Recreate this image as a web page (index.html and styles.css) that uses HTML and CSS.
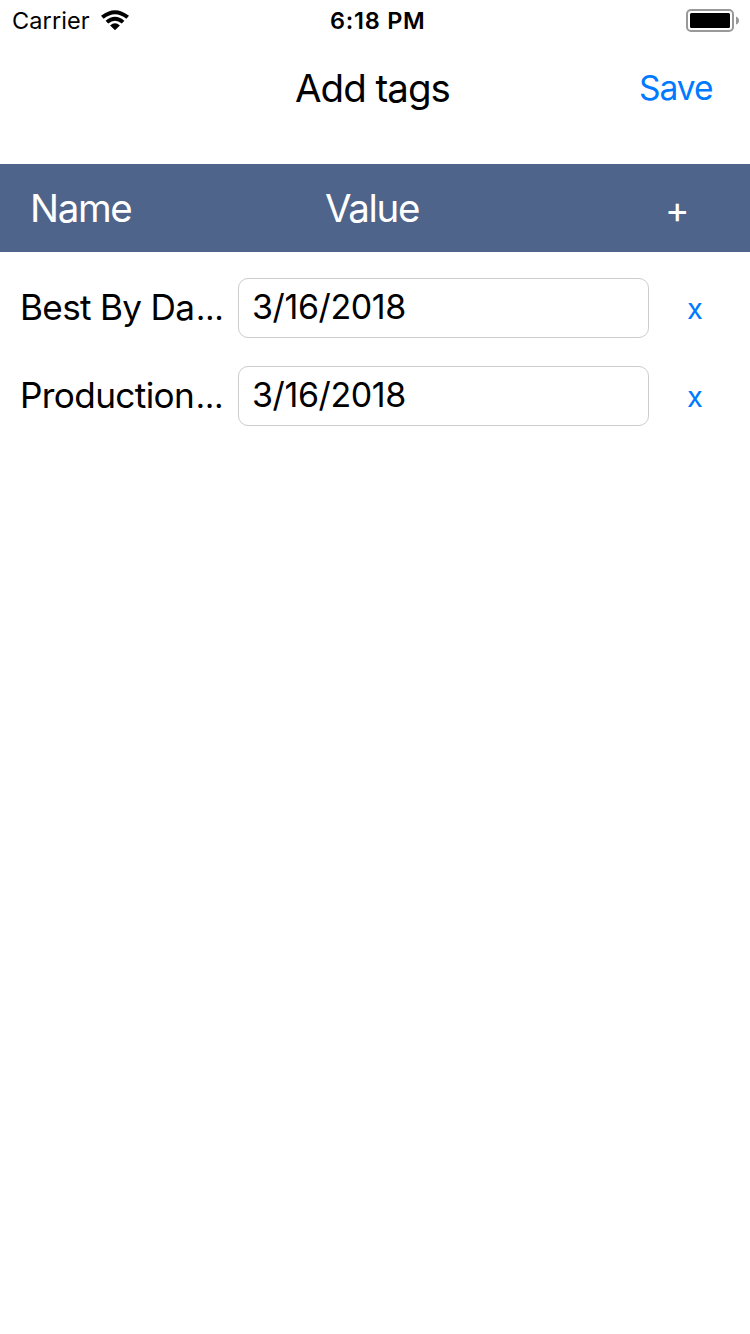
FILE: index.html
```html
<!DOCTYPE html>
<html lang="en">
<head>
<meta charset="utf-8">
<title>Add tags</title>
<link rel="stylesheet" href="styles.css">
</head>
<body>
<div class="status">
  <div class="network"><span class="carrier">Carrier</span>
    <svg class="wifi" width="28" height="20" viewBox="0 0 28 20"><path d="M0 5.8Q14-5.4 28 5.8L25.4 8.7Q14-.4 2.6 8.7ZM4.6 10.7Q14 3 23.4 10.7L20.8 13.5Q14 8 7.2 13.5ZM9.1 15.4Q14 11.2 18.9 15.4L14 20.2Z"/></svg>
  </div>
  <span class="time">6:18 PM</span>
  <svg class="battery" width="53" height="24" viewBox="0 0 53 24"><rect x="1" y="1" width="46" height="21" rx="4" fill="#fff" stroke="#999" stroke-width="2"/><rect x="4" y="4" width="40" height="15" rx="1.5"/><path d="M50 7.5Q53 8.5 53 11.5T50 15.5Z" fill="#999"/></svg>
</div>
<header class="nav"><h1 class="title">Add tags</h1><a class="save">Save</a></header>
<div class="columns"><span class="name-head">Name</span><span class="value-head">Value</span><span class="add">+</span></div>
<main class="tags">
  <div class="tag"><label class="best">Best By Da<span class="dots">…</span></label><div class="field">3/16/2018</div><a class="remove">x</a></div>
  <div class="tag"><label class="production">Production<span class="dots">…</span></label><div class="field">3/16/2018</div><a class="remove">x</a></div>
</main>
</body>
</html>
```
FILE: styles.css
```css
* { box-sizing: border-box; }
body { margin: 0; background: #fff; color: #000; font-family: Inter, "Liberation Sans", sans-serif; white-space: nowrap; }
svg { display: block; }
.status { height: 40px; display: grid; grid-template-columns: 330px 1fr 64px; line-height: 42px; font-size: 23.5px; }
.network { display: flex; padding-left: 12px; }
.carrier { width: 89px; letter-spacing: .1px; }
.wifi { margin-top: 10px; }
.time { font-weight: 600; letter-spacing: .75px; }
.battery { margin-top: 9px; }
.nav { height: 124px; display: grid; grid-template-columns: 344px 1fr; align-items: start; padding: 10px 0 0 295px; line-height: 76px; }
.title { margin: 0; font-size: 38.5px; font-weight: 400; letter-spacing: -1px; }
.save { font-size: 33.5px; letter-spacing: -1px; color: #007aff; }
.columns { height: 88px; display: grid; grid-template-columns: 295px 340px 1fr; padding-left: 30px; background: #4f648a; color: #fff; font-size: 38.5px; letter-spacing: -1.35px; line-height: 88px; }
.add { font-size: 37px; line-height: 91px; }
.tags { padding: 26px 0 0 20px; display: grid; gap: 28px; }
.tag { height: 60px; display: grid; grid-template-columns: 218px 411px 38px 1fr; grid-template-rows: 60px; line-height: 59px; font-size: 35.2px; letter-spacing: -.7px; }
.production { letter-spacing: -.65px; }
.dots { margin-left: 1.5px; font-size: 32px; line-height: 1; letter-spacing: 0; }
.field { border: 1px solid #ccc; border-radius: 10px; padding-left: 13px; font-size: 34px; letter-spacing: -.4px; line-height: 55px; }
.remove { grid-column: 4; font-size: 29px; line-height: 61px; color: #007aff; }
```
